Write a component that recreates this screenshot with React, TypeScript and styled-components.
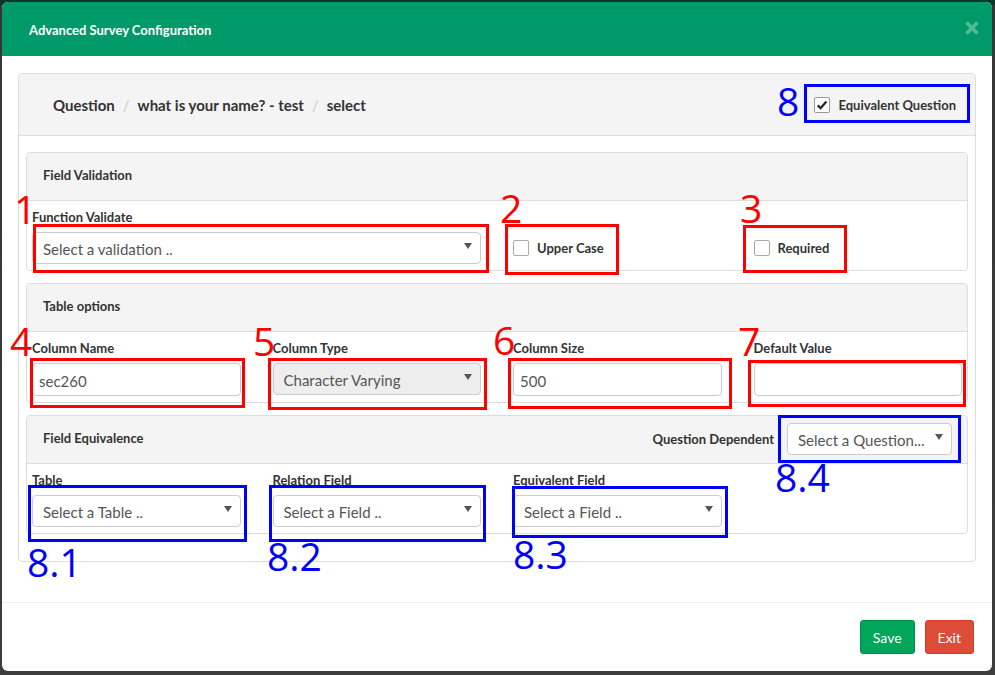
import React from 'react';
import styled, { createGlobalStyle } from 'styled-components';

const GlobalStyle = createGlobalStyle`
  html, body { margin: 0; padding: 0; }
  body {
    background: #3c3c3c;
    font-family: Lato, "Noto Sans", sans-serif;
    color: #333;
  }
  * { box-sizing: border-box; }
`;

const Backdrop = styled.div`
  position: relative;
  width: 995px;
  height: 675px;
  padding: 2px 3px 0 2px;
  background: linear-gradient(#0e3628 0, #0e3628 5px, #353535 5px, #3e3e3e 100%);
  overflow: hidden;
`;

const Modal = styled.div`
  width: 990px;
  height: 669px;
  background: #fff;
  border-radius: 6px;
  overflow: hidden;
  display: flex;
  flex-direction: column;
`;

const Header = styled.div`
  height: 54px;
  flex-shrink: 0;
  background: #009a69;
  display: flex;
  align-items: center;
  justify-content: space-between;
  padding: 2px 12px 0 27px;
`;

const Title = styled.span`
  color: #fff;
  font-size: 13px;
  font-weight: 700;
`;

const CloseButton = styled.span`
  display: flex;
  width: 16px;
  height: 16px;
  margin-bottom: 4px;
`;

const Body = styled.div`
  flex: 1;
  padding: 17px 16px 0 16px;
`;

const Panel = styled.div`
  border: 1px solid #ddd;
  border-radius: 4px;
`;

const PanelHeading = styled.div`
  height: 62px;
  background: #f4f4f4;
  border-bottom: 1px solid #ddd;
  border-radius: 4px 4px 0 0;
  display: flex;
  align-items: center;
  justify-content: space-between;
  padding: 0 18px 0 34px;
`;

const Breadcrumb = styled.div`
  display: flex;
  align-items: center;
  font-size: 15px;
  font-weight: 700;
  color: #333;
`;

const Sep = styled.span`
  color: #ccc;
  font-weight: 400;
  padding: 0 8px;
`;

const CheckLabel = styled.label`
  display: flex;
  align-items: center;
  gap: 8px;
  font-size: 13px;
  font-weight: 700;
  color: #333;
  padding-right: 1px;
`;

const CheckBox = styled.span<{ $checked?: boolean }>`
  width: 16px;
  height: 16px;
  flex-shrink: 0;
  border: 1px solid ${p => (p.$checked ? '#999' : '#aaa')};
  border-radius: 2px;
  background: #fff;
  display: flex;
  align-items: center;
  justify-content: center;
`;

const PanelContent = styled.div`
  padding: 16px 7px 27px 7px;
  display: flex;
  flex-direction: column;
  gap: 12px;
`;

const InnerPanel = styled.div`
  border: 1px solid #ddd;
  border-radius: 4px;
`;

const InnerHeading = styled.div`
  height: 48px;
  background: #f4f4f4;
  border-bottom: 1px solid #ddd;
  border-radius: 4px 4px 0 0;
  display: flex;
  align-items: center;
  justify-content: space-between;
  padding: 0 15px 4px 16px;
`;

const InnerTitle = styled.span`
  font-size: 13px;
  font-weight: 700;
  color: #333;
`;

const HeadingSide = styled.div`
  display: flex;
  align-items: center;
  gap: 13px;
  margin-top: 3px;
`;

const FormGrid = styled.div`
  display: grid;
  grid-template-columns: repeat(4, 1fr);
  column-gap: 32px;
  padding: 9px 5px 6px 5px;
`;

const Field = styled.div<{ $span?: number }>`
  grid-column: span ${p => p.$span ?? 1};
  display: flex;
  flex-direction: column;
`;

const FieldLabel = styled.label`
  font-size: 13px;
  font-weight: 700;
  color: #333;
  line-height: 15px;
  margin-bottom: 7px;
`;

const Select = styled.div<{ $disabled?: boolean; $width?: number }>`
  height: 32px;
  width: ${p => (p.$width ? `${p.$width}px` : '100%')};
  border: 1px solid #ccc;
  border-radius: 4px;
  background: ${p => (p.$disabled ? '#eee' : '#fff')};
  display: flex;
  align-items: center;
  justify-content: space-between;
  padding: 2px 8px 0 10px;
  font-size: 15px;
  color: #555;
`;

const Caret = styled.span`
  width: 0;
  height: 0;
  border-left: 4px solid transparent;
  border-right: 4px solid transparent;
  border-top: 6px solid #555;
  margin-bottom: 6px;
`;

const TextInput = styled.input`
  height: 33px;
  width: 100%;
  border: 1px solid #ccc;
  border-radius: 4px;
  padding: 2px 6px 0 6px;
  font-family: inherit;
  font-size: 15px;
  color: #555;
  background: #fff;
  outline: none;
`;

const CheckInline = styled.div`
  padding-top: 22px;
  height: 54px;
  display: flex;
  align-items: center;
  gap: 8px;
  font-size: 13px;
  font-weight: 700;
  color: #333;
`;

const Footer = styled.div`
  border-top: 1px solid #f0f0f0;
  padding: 17px 18px;
  display: flex;
  justify-content: flex-end;
  gap: 10px;
`;

const Button = styled.button<{ $variant: 'save' | 'exit' }>`
  height: 34px;
  padding: 0 12px;
  border-radius: 3px;
  font-family: inherit;
  font-size: 14px;
  color: #fff;
  background: ${p => (p.$variant === 'save' ? '#00a65a' : '#dd4b39')};
  border: 1px solid ${p => (p.$variant === 'save' ? '#008d4c' : '#d73925')};
`;

/* annotation marks drawn over the screenshot */
const MarkBox = styled.div<{ $color: string }>`
  position: absolute;
  border: 3px solid ${p => p.$color};
  pointer-events: none;
`;

const MarkNum = styled.span<{ $color: string }>`
  position: absolute;
  font-family: "Open Sans", "Noto Sans", sans-serif;
  font-size: 39px;
  line-height: 1;
  color: ${p => p.$color};
  pointer-events: none;
`;

const RED = '#ff0000';
const BLUE = '#0000ff';

const boxes = [
  { c: RED, x: 33, y: 224, w: 456, h: 49 },
  { c: RED, x: 505, y: 224, w: 114, h: 51 },
  { c: RED, x: 743, y: 225, w: 104, h: 48 },
  { c: RED, x: 30, y: 358, w: 215, h: 50 },
  { c: RED, x: 268, y: 358, w: 219, h: 52 },
  { c: RED, x: 508, y: 358, w: 224, h: 51 },
  { c: RED, x: 748, y: 360, w: 218, h: 47 },
  { c: BLUE, x: 804, y: 84, w: 166, h: 39 },
  { c: BLUE, x: 28, y: 485, w: 219, h: 57 },
  { c: BLUE, x: 269, y: 485, w: 217, h: 57 },
  { c: BLUE, x: 512, y: 486, w: 216, h: 52 },
  { c: BLUE, x: 778, y: 415, w: 183, h: 48 },
];

const nums = [
  { c: RED, t: '1', x: 14, y: 196 },
  { c: RED, t: '2', x: 500, y: 195 },
  { c: RED, t: '3', x: 740, y: 195 },
  { c: RED, t: '4', x: 10, y: 328 },
  { c: RED, t: '5', x: 253, y: 328 },
  { c: RED, t: '6', x: 493, y: 327 },
  { c: RED, t: '7', x: 738, y: 328 },
  { c: BLUE, t: '8', x: 777, y: 88 },
  { c: BLUE, t: '8.1', x: 27, y: 549 },
  { c: BLUE, t: '8.2', x: 267, y: 543 },
  { c: BLUE, t: '8.3', x: 513, y: 541 },
  { c: BLUE, t: '8.4', x: 775, y: 464 },
];

const Check = () => (
  <svg width="12" height="12" viewBox="0 0 12 12">
    <path d="M1.8 6.4 L4.6 9.2 L10.4 2.6" fill="none" stroke="#222" strokeWidth="2.2" />
  </svg>
);

const CloseIcon = () => (
  <svg width="16" height="16" viewBox="0 0 16 16">
    <path d="M2.5 2.5 L13.5 13.5 M13.5 2.5 L2.5 13.5" stroke="rgba(255,255,255,0.32)" strokeWidth="3.6" strokeLinecap="butt" />
  </svg>
);

const SelectBox: React.FC<{ text: string; disabled?: boolean; width?: number }> = ({ text, disabled, width }) => (
  <Select $disabled={disabled} $width={width}>
    <span>{text}</span>
    <Caret />
  </Select>
);

export default function App() {
  return (
    <>
      <GlobalStyle />
      <Backdrop>
        <Modal>
          <Header>
            <Title>Advanced Survey Configuration</Title>
            <CloseButton>
              <CloseIcon />
            </CloseButton>
          </Header>
          <Body>
            <Panel>
              <PanelHeading>
                <Breadcrumb>
                  <span>Question</span>
                  <Sep>/</Sep>
                  <span>what is your name? - test</span>
                  <Sep>/</Sep>
                  <span>select</span>
                </Breadcrumb>
                <CheckLabel>
                  <CheckBox $checked>
                    <Check />
                  </CheckBox>
                  Equivalent Question
                </CheckLabel>
              </PanelHeading>
              <PanelContent>
                <InnerPanel>
                  <InnerHeading>
                    <InnerTitle>Field Validation</InnerTitle>
                  </InnerHeading>
                  <FormGrid>
                    <Field $span={2}>
                      <FieldLabel>Function Validate</FieldLabel>
                      <SelectBox text="Select a validation .." />
                    </Field>
                    <CheckInline>
                      <CheckBox />
                      Upper Case
                    </CheckInline>
                    <CheckInline>
                      <CheckBox />
                      Required
                    </CheckInline>
                  </FormGrid>
                </InnerPanel>

                <InnerPanel>
                  <InnerHeading>
                    <InnerTitle>Table options</InnerTitle>
                  </InnerHeading>
                  <FormGrid>
                    <Field>
                      <FieldLabel>Column Name</FieldLabel>
                      <TextInput defaultValue="sec260" />
                    </Field>
                    <Field>
                      <FieldLabel>Column Type</FieldLabel>
                      <SelectBox text="Character Varying" disabled />
                    </Field>
                    <Field>
                      <FieldLabel>Column Size</FieldLabel>
                      <TextInput defaultValue="500" />
                    </Field>
                    <Field>
                      <FieldLabel>Default Value</FieldLabel>
                      <TextInput defaultValue="" />
                    </Field>
                  </FormGrid>
                </InnerPanel>

                <InnerPanel>
                  <InnerHeading>
                    <InnerTitle>Field Equivalence</InnerTitle>
                    <HeadingSide>
                      <InnerTitle>Question Dependent</InnerTitle>
                      <SelectBox text="Select a Question..." width={165} />
                    </HeadingSide>
                  </InnerHeading>
                  <FormGrid>
                    <Field>
                      <FieldLabel>Table</FieldLabel>
                      <SelectBox text="Select a Table .." />
                    </Field>
                    <Field>
                      <FieldLabel>Relation Field</FieldLabel>
                      <SelectBox text="Select a Field .." />
                    </Field>
                    <Field>
                      <FieldLabel>Equivalent Field</FieldLabel>
                      <SelectBox text="Select a Field .." />
                    </Field>
                  </FormGrid>
                </InnerPanel>
              </PanelContent>
            </Panel>
          </Body>
          <Footer>
            <Button $variant="save">Save</Button>
            <Button $variant="exit">Exit</Button>
          </Footer>
        </Modal>

        {boxes.map((b, i) => (
          <MarkBox key={`b${i}`} $color={b.c} style={{ left: b.x, top: b.y, width: b.w, height: b.h }} />
        ))}
        {nums.map((n, i) => (
          <MarkNum key={`n${i}`} $color={n.c} style={{ left: n.x, top: n.y - 7 }}>
            {n.t}
          </MarkNum>
        ))}
      </Backdrop>
    </>
  );
}
